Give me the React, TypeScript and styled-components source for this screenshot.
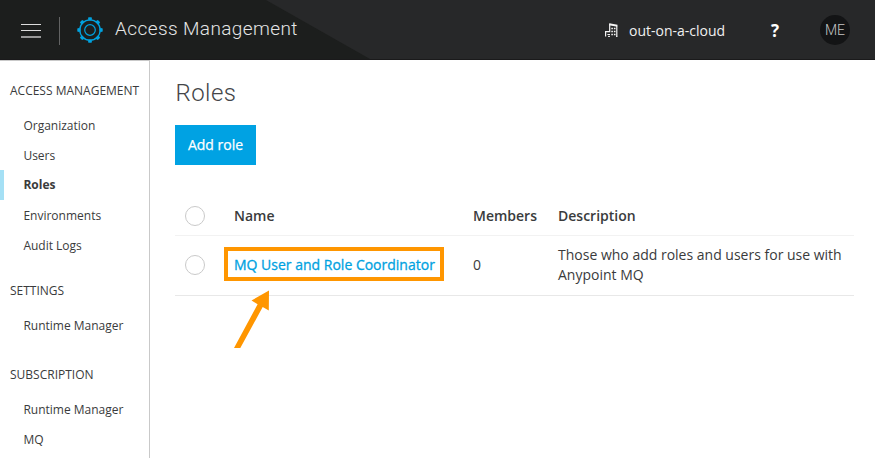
import React from "react";
import styled, { createGlobalStyle } from "styled-components";

const GlobalStyle = createGlobalStyle`
  * { box-sizing: border-box; }
  body {
    margin: 0;
    background: #fff;
    color: #3a3b3c;
    font-family: "Open Sans", sans-serif;
    overflow: hidden;
  }
`;

const Page = styled.div`
  display: flex;
  flex-direction: column;
  width: 875px;
  height: 458px;
`;

const Header = styled.header`
  display: flex;
  justify-content: space-between;
  height: 60px;
  flex: none;
  background: #272829;
  border-bottom: 1px solid #1a1a1b;
`;

const Brand = styled.div`
  display: flex;
  align-items: center;
  width: 371px;
  padding-left: 21px;
  background: #1c1e1d;
  clip-path: polygon(0 0, 266px 0, 370px 100%, 0 100%);
`;

const MenuButton = styled.button`
  display: flex;
  margin-top: 2px;
  padding: 0;
  border: 0;
  background: none;
`;

const Divider = styled.span`
  width: 1px;
  height: 28px;
  margin: 2px 17px 0 18px;
  background: #626363;
`;

const AppTitle = styled.span`
  margin: -1px 0 0 12px;
  color: #e4e5e5;
  font: 300 19px/28px Roboto, sans-serif;
  letter-spacing: 0.4px;
  white-space: nowrap;
`;

const Account = styled.div`
  display: flex;
  align-items: center;
  padding-right: 25px;
  color: #fff;
`;

const OrgName = styled.span`
  width: 141px;
  margin: 1px 0 0 11px;
  color: #f0f0f0;
  font-size: 14px;
`;

const HelpButton = styled.button`
  width: 10px;
  height: 20px;
  margin: 2px 40px 0 0;
  padding: 0;
  border: 0;
  background: none;
  color: #fff;
  font: 700 17px/20px "Open Sans", sans-serif;
`;

const Avatar = styled.span`
  display: flex;
  align-items: center;
  justify-content: center;
  width: 30px;
  height: 30px;
  margin-top: 1px;
  padding-bottom: 1px;
  border-radius: 50%;
  background: #131415;
  color: #c4c5c5;
  font: 300 14px/20px Roboto, sans-serif;
`;

const Body = styled.div`
  display: flex;
  flex: 1;
  min-height: 0;
`;

const Sidebar = styled.nav`
  width: 150px;
  flex: none;
  padding-top: 20px;
  border-top: 1px solid #c9c9c9;
  border-right: 1px solid #c9c9c9;
`;

const NavGroup = styled.section<{ $gap: number }>`
  margin-bottom: ${(p) => p.$gap}px;
`;

const NavHeading = styled.h2`
  margin: 0 0 10px;
  padding-left: 10px;
  font-size: 12px;
  font-weight: 400;
  line-height: 20px;
  white-space: nowrap;
`;

const NavItem = styled.a<{ $active?: boolean }>`
  display: block;
  height: 30px;
  margin: ${(p) => (p.$active ? "-1px 0 1px" : "0")};
  padding-left: ${(p) => (p.$active ? 19.4 : 23.4)}px;
  border-left: ${(p) => (p.$active ? "4px solid #a5e0f5" : "0")};
  font-size: 12px;
  font-weight: ${(p) => (p.$active ? 700 : 400)};
  line-height: 30px;
`;

const Main = styled.main`
  flex: 1;
  padding: 17px 21px 0 25px;
`;

const Heading = styled.h1`
  margin: 0;
  padding-left: 0.6px;
  color: #444548;
  font: 300 24px/32px Roboto, sans-serif;
  letter-spacing: 0.4px;
`;

const AddButton = styled.button`
  display: block;
  width: 81px;
  height: 40px;
  margin-top: 16px;
  padding: 0;
  border: 0;
  background: #00a2e3;
  color: #fff;
  font: 500 14px/20px "Open Sans", sans-serif;
  -webkit-text-stroke: 0.25px;
`;

const Table = styled.div`
  margin-top: 31px;
`;

const Row = styled.div<{ $head?: boolean }>`
  display: grid;
  grid-template-columns: 59px 239px 85px 1fr;
  align-items: center;
  height: ${(p) => (p.$head ? 40 : 60)}px;
  padding-bottom: ${(p) => (p.$head ? 0 : 1)}px;
  border-bottom: 1px solid ${(p) => (p.$head ? "#f2f2f2" : "#e8e8e8")};
  font-size: 14px;
  font-weight: ${(p) => (p.$head ? 600 : 400)};
  line-height: 20px;
`;

const Radio = styled.span`
  width: 20px;
  height: 20px;
  margin-left: 10px;
  border: 1px solid #cacaca;
  border-radius: 50%;
`;

const NameCell = styled.div`
  position: relative;
`;

const RoleLink = styled.a`
  color: #00a2df;
  font-weight: 500;
  white-space: nowrap;
  -webkit-text-stroke: 0.3px;
`;

const Highlight = styled.span`
  position: absolute;
  left: -10px;
  top: -8px;
  width: 220px;
  height: 34px;
  border: 4px solid #ff9600;
`;

const Arrow = styled.svg`
  position: absolute;
  left: 0;
  top: 35px;
`;

const Description = styled.div`
  white-space: pre-line;
`;

const MenuIcon = () => (
  <svg width="20" height="16" viewBox="0 0 20 16" shapeRendering="crispEdges">
    <path d="M0 1.5h20M0 7.5h20" stroke="#dcdcdc" />
    <path d="M0 14h20" stroke="#989898" strokeWidth="2" />
  </svg>
);

const GearIcon = () => (
  <svg width="26" height="26" viewBox="0 0 26 26" fill="none" stroke="#00a2df">
    <circle cx="13" cy="13" r="5.3" strokeWidth="1.2" />
    <circle cx="13" cy="13" r="10.2" strokeWidth="1.3" />
    {[0, 45, 90, 135, 180, 225, 270, 315].map((a) => (
      <path
        key={a}
        transform={`rotate(${a} 13 13)`}
        d="M11.4 0.3h3.2l0.4 1.7L14.2 3.6h-2.4L11 2z"
        fill="#00a2df"
        stroke="none"
      />
    ))}
  </svg>
);

const BuildingIcon = () => (
  <svg width="13" height="14" viewBox="0 0 13 14" fill="none" stroke="#f4f4f4">
    <path d="M0.6 13.5V8.6H4.7V0.8M11.8 2.6V13.5" strokeWidth="1.2" />
    <path d="M4.2 1.2L12.3 2.8" strokeWidth="1.9" />
    <path d="M2.4 11.5H5" strokeWidth="1" />
    <path d="M6.3 5.5h4.4M6.3 8.5h4.4M6.3 11.5h4.4" strokeWidth="1.5" strokeDasharray="1.6 1" />
    <path d="M3 13.4h2M11 13.4h1.4" strokeWidth="1" />
  </svg>
);

type Group = { title: string; gap: number; items: string[] };

const groups: Group[] = [
  {
    title: "ACCESS MANAGEMENT",
    gap: 20,
    items: ["Organization", "Users", "Roles", "Environments", "Audit Logs"],
  },
  { title: "SETTINGS", gap: 24, items: ["Runtime Manager"] },
  { title: "SUBSCRIPTION", gap: 0, items: ["Runtime Manager", "MQ"] },
];

export default function App() {
  return (
    <Page>
      <GlobalStyle />
      <Header>
        <Brand>
          <MenuButton aria-label="Menu">
            <MenuIcon />
          </MenuButton>
          <Divider />
          <GearIcon />
          <AppTitle>Access Management</AppTitle>
        </Brand>
        <Account>
          <BuildingIcon />
          <OrgName>out-on-a-cloud</OrgName>
          <HelpButton>?</HelpButton>
          <Avatar>ME</Avatar>
        </Account>
      </Header>
      <Body>
        <Sidebar>
          {groups.map((group) => (
            <NavGroup key={group.title} $gap={group.gap}>
              <NavHeading>{group.title}</NavHeading>
              {group.items.map((item) => (
                <NavItem key={item} $active={item === "Roles"}>
                  {item}
                </NavItem>
              ))}
            </NavGroup>
          ))}
        </Sidebar>
        <Main>
          <Heading>Roles</Heading>
          <AddButton>Add role</AddButton>
          <Table>
            <Row $head>
              <Radio />
              <div>Name</div>
              <div>Members</div>
              <div>Description</div>
            </Row>
            <Row>
              <Radio />
              <NameCell>
                <RoleLink>MQ User and Role Coordinator</RoleLink>
                <Highlight />
                <Arrow width="40" height="60" viewBox="0 0 40 60">
                  <path d="M35 0.5L34.8 20.5L28.7 17L6.3 58H0L23.6 14.2L17.5 10.5Z" fill="#ff9600" />
                </Arrow>
              </NameCell>
              <div>0</div>
              <Description>{"Those who add roles and users for use with\nAnypoint MQ"}</Description>
            </Row>
          </Table>
        </Main>
      </Body>
    </Page>
  );
}
